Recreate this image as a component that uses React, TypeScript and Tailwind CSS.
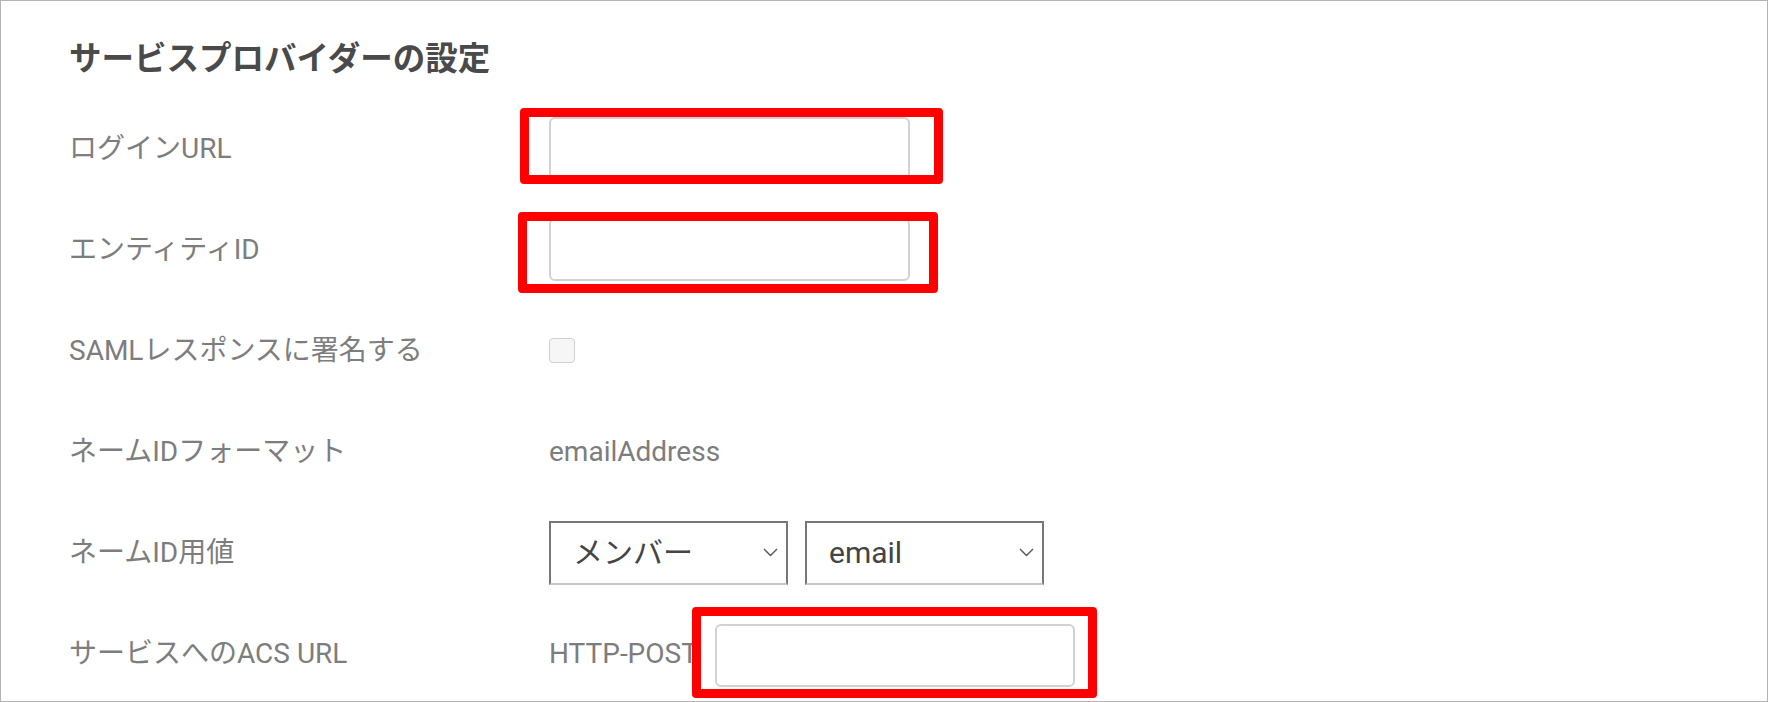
import { ReactNode } from 'react';

function Row({ label, children }: { label: string; children?: ReactNode }) {
  return (
    <div className="flex h-[101px] items-center">
      <div className="w-[480px] shrink-0 text-[28px] text-[#7d7d7d]">{label}</div>
      <div className="flex items-center">{children}</div>
    </div>
  );
}

function TextBox({ w = 'w-[361px]' }: { w?: string }) {
  return <div className={`${w} h-[63px] rounded-[6px] border-2 border-[#d2d2d2] bg-white`} />;
}

function Chevron() {
  return (
    <svg width="15" height="9" viewBox="0 0 15 9" className="shrink-0">
      <polyline points="1,1 7.5,7.5 14,1" fill="none" stroke="#555" strokeWidth="1.4" />
    </svg>
  );
}

function Select({ value }: { value: string }) {
  return (
    <div className="flex h-[64px] w-[239px] items-center justify-between border-2 border-[#777] border-b-[#c8c8c8] pl-[22px] pr-[8px]">
      <span className="text-[30px] text-[#444]">{value}</span>
      <Chevron />
    </div>
  );
}

export default function App() {
  return (
    <div className="relative h-[702px] w-[1768px] overflow-hidden border border-[#b4b4b4] bg-white font-['Roboto','Noto_Sans_CJK_JP',sans-serif]">
      <div className="pl-[68px] pt-[37px]">
        <h2 className="mb-[18px] text-[32.5px] leading-[42px] font-bold text-[#4a4a4a]">
          サービスプロバイダーの設定
        </h2>

        <Row label="ログインURL">
          <TextBox />
        </Row>
        <Row label="エンティティID">
          <TextBox />
        </Row>
        <Row label="SAMLレスポンスに署名する">
          <div className="h-[25px] w-[26px] rounded-[4px] border-[1.5px] border-[#cfcfcf] bg-[#f6f6f6]" />
        </Row>
        <Row label="ネームIDフォーマット">
          <span className="text-[28px] text-[#7d7d7d]">emailAddress</span>
        </Row>
        <Row label="ネームID用値">
          <div className="flex gap-[17px]">
            <Select value="メンバー" />
            <Select value="email" />
          </div>
        </Row>
        <Row label="サービスへのACS URL">
          <span className="text-[28px] text-[#7d7d7d]">HTTP-POST</span>
          <div className="ml-[17px] mt-[4px]">
            <TextBox w="w-[360px]" />
          </div>
        </Row>
      </div>

      {/* annotation boxes */}
      <div className="absolute left-[519px] top-[107px] h-[76px] w-[423px] rounded-[4px] border-[9px] border-[#ff0000]" />
      <div className="absolute left-[517px] top-[211px] h-[81px] w-[420px] rounded-[4px] border-[9px] border-[#ff0000]" />
      <div className="absolute left-[691px] top-[606px] h-[91px] w-[405px] rounded-[4px] border-[9px] border-[#ff0000]" />
    </div>
  );
}
